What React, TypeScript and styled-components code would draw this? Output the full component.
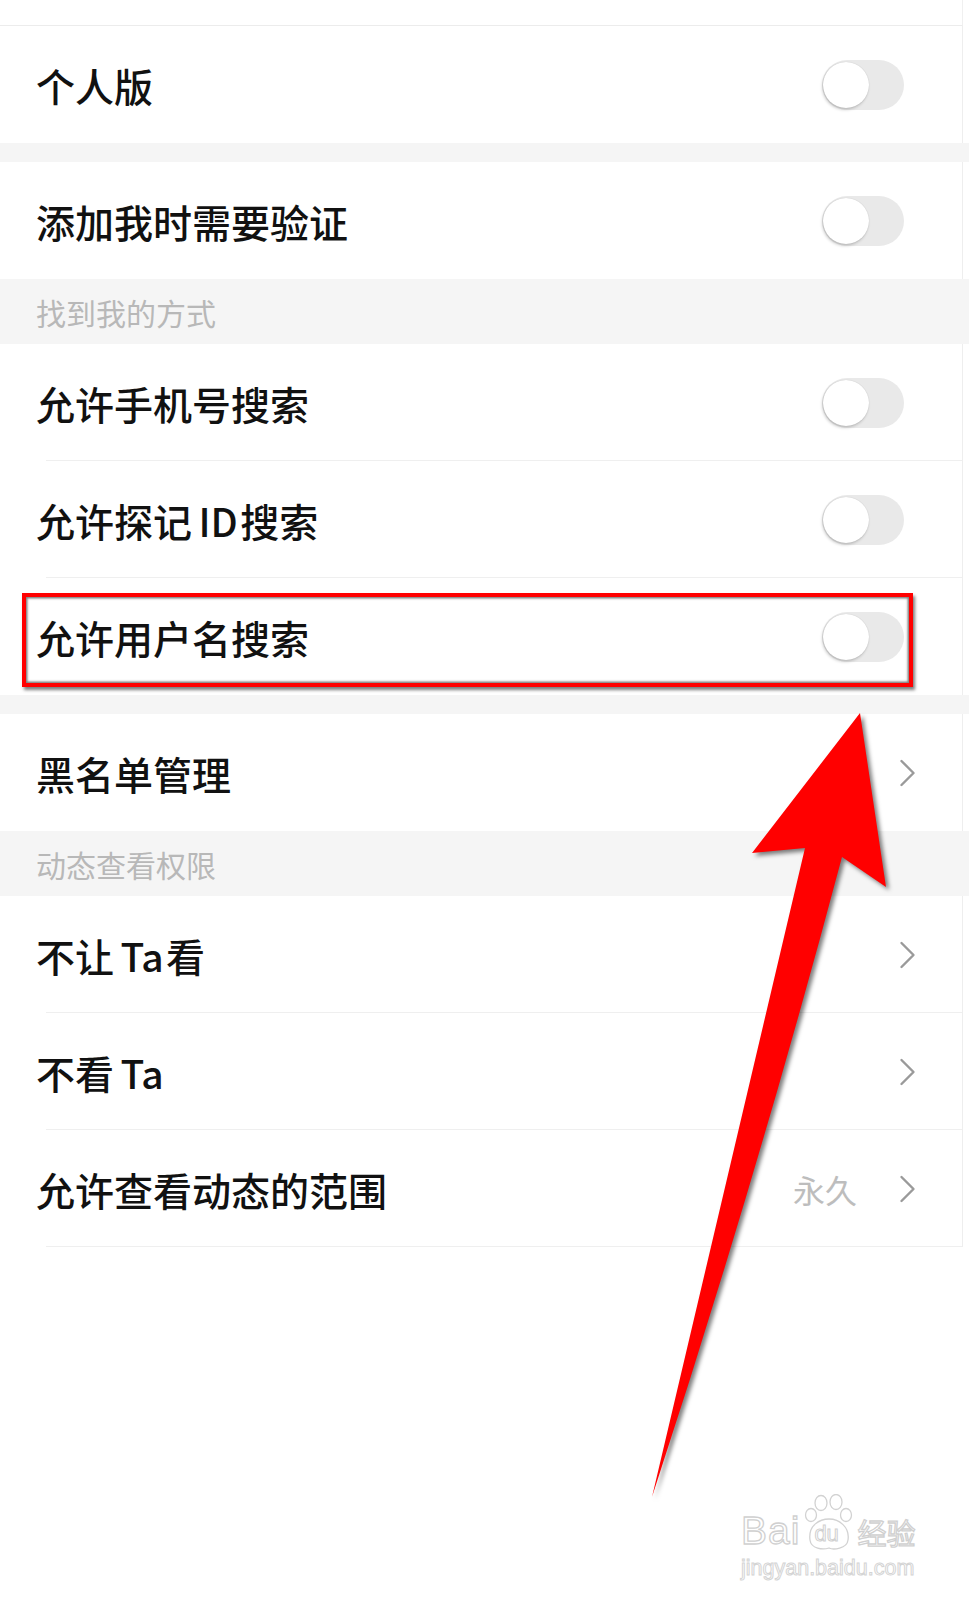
import React from 'react';
import styled, { createGlobalStyle } from 'styled-components';

type Item = {
  label: string;
  kind: 'toggle' | 'link';
  value?: string;
};

type Block =
  | { type: 'group'; items: Item[]; lastDivider?: boolean }
  | { type: 'gap' }
  | { type: 'header'; title: string };

// narrow spaces around latin words, the way iOS spaces mixed text
const sp = '\u2006';
const hair = '\u200A';

const blocks: Block[] = [
  { type: 'group', items: [{ label: '个人版', kind: 'toggle' }] },
  { type: 'gap' },
  { type: 'group', items: [{ label: '添加我时需要验证', kind: 'toggle' }] },
  { type: 'header', title: '找到我的方式' },
  {
    type: 'group',
    items: [
      { label: '允许手机号搜索', kind: 'toggle' },
      { label: `允许探记${sp}ID${hair}搜索`, kind: 'toggle' },
      { label: '允许用户名搜索', kind: 'toggle' },
    ],
  },
  { type: 'gap' },
  { type: 'group', items: [{ label: '黑名单管理', kind: 'link' }] },
  { type: 'header', title: '动态查看权限' },
  {
    type: 'group',
    lastDivider: true,
    items: [
      { label: `不让${sp}Ta${hair}看`, kind: 'link' },
      { label: `不看${sp}Ta`, kind: 'link' },
      { label: '允许查看动态的范围', kind: 'link', value: '永久' },
    ],
  },
];

const Chevron: React.FC = () => (
  <ChevronIcon width="17" height="28" viewBox="0 0 17 28">
    <path d="M2.5 2 L14.5 14 L2.5 26" />
  </ChevronIcon>
);

const SettingRow: React.FC<{ item: Item; divider: boolean }> = ({ item, divider }) => (
  <Row divider={divider}>
    <Label>{item.label}</Label>
    {item.value && <Value>{item.value}</Value>}
    {item.kind === 'toggle' ? (
      <Track>
        <Knob />
      </Track>
    ) : (
      <Chevron />
    )}
  </Row>
);

const Arrow: React.FC = () => (
  <ArrowSvg width="270" height="810" viewBox="0 0 270 810">
    <path
      d="M220 13 L246 187 L202 157 Q117 477 12 797 L165 148 L112 153 Z"
      fill="#ff0000"
    />
  </ArrowSvg>
);

const Watermark: React.FC = () => (
  <Mark>
    <MarkTop>
      <MarkWord>Bai</MarkWord>
      <Paw>
        <svg width="52" height="58" viewBox="0 0 52 58">
          <g fill="#fff" stroke="#d2d2d2" strokeWidth="1.3">
            <ellipse cx="9" cy="21" rx="5.5" ry="6.5" />
            <ellipse cx="19" cy="9" rx="6" ry="7.5" />
            <ellipse cx="34" cy="8" rx="6" ry="7.5" />
            <ellipse cx="44" cy="21" rx="5.5" ry="6.5" />
            <path d="M8 46 C6 31 18 25 27 25 C37 25 48 33 46 46 C45 55 31 56 27 54 C21 56 9 55 8 46 Z" />
          </g>
        </svg>
        <PawText>du</PawText>
      </Paw>
      <MarkWord cjk>经验</MarkWord>
    </MarkTop>
    <MarkUrl>jingyan.baidu.com</MarkUrl>
  </Mark>
);

const App: React.FC = () => (
  <>
    <GlobalStyle />
    <Page>
      <TopStrip />
      {blocks.map((block, i) => {
        if (block.type === 'gap') return <Gap key={i} />;
        if (block.type === 'header')
          return (
            <Header key={i}>
              <HeaderText>{block.title}</HeaderText>
            </Header>
          );
        return (
          <Group key={i}>
            {block.items.map((item, j) => (
              <SettingRow
                key={item.label}
                item={item}
                divider={j < block.items.length - 1 || !!block.lastDivider}
              />
            ))}
          </Group>
        );
      })}
      <Highlight />
      <Arrow />
      <Watermark />
    </Page>
  </>
);

const GlobalStyle = createGlobalStyle`
  body {
    margin: 0;
    background: #ffffff;
    font-family: "Noto Sans CJK SC", "Noto Sans", sans-serif;
  }
`;

const Page = styled.div`
  position: relative;
  width: 969px;
  min-height: 1600px;
  background: #ffffff;
  overflow: hidden;
`;

const TopStrip = styled.div`
  width: 963px;
  height: 26px;
  box-sizing: border-box;
  border-bottom: 1px solid #ececec;
  border-right: 1px solid #f0f0f0;
`;

const Group = styled.div`
  display: flex;
  flex-direction: column;
  background: #ffffff;
`;

const Row = styled.div<{ divider: boolean }>`
  position: relative;
  display: flex;
  align-items: center;
  box-sizing: border-box;
  width: 963px;
  height: 117px;
  padding: 0 46px 0 36px;
  border-right: 1px solid #eeeeee;
  background: #ffffff;

  &::after {
    content: '';
    display: ${(p) => (p.divider ? 'block' : 'none')};
    position: absolute;
    left: 46px;
    right: 0;
    bottom: 0;
    height: 1px;
    background: #efefef;
  }
`;

const Label = styled.span`
  flex: 1;
  font-size: 39px;
  font-weight: 500;
  color: #111111;
  white-space: nowrap;
`;

const Value = styled.span`
  margin-right: 42px;
  font-size: 32px;
  color: #bdbdbd;
`;

const Track = styled.div`
  display: flex;
  align-items: center;
  width: 82px;
  height: 50px;
  margin-right: 12px;
  border-radius: 25px;
  background: #e9e9e9;
`;

const Knob = styled.div`
  width: 46px;
  height: 46px;
  margin-left: 1px;
  border-radius: 50%;
  background: #ffffff;
  box-shadow: -1px 2px 3px rgba(0, 0, 0, 0.18), 0 0 1px rgba(0, 0, 0, 0.2);
`;

const ChevronIcon = styled.svg`
  flex-shrink: 0;
  fill: none;
  stroke: #9a9a9a;
  stroke-width: 2.4;
  stroke-linecap: round;
  stroke-linejoin: round;
`;

const Gap = styled.div`
  height: 19px;
  background: #f5f5f5;
`;

const Header = styled.div`
  display: flex;
  align-items: center;
  height: 65px;
  padding-left: 36px;
  background: #f5f5f5;
`;

const HeaderText = styled.span`
  font-size: 30px;
  color: #b8b8b8;
`;

const Highlight = styled.div`
  position: absolute;
  left: 22px;
  top: 593px;
  width: 891px;
  height: 94px;
  box-sizing: border-box;
  border: 4px solid #ff0000;
  box-shadow: 2px 3px 3px rgba(0, 0, 0, 0.5),
    inset 0 0 2px 1.5px rgba(0, 0, 0, 0.5);
  pointer-events: none;
`;

const ArrowSvg = styled.svg`
  position: absolute;
  left: 640px;
  top: 700px;
  filter: drop-shadow(3px 3px 2px rgba(0, 0, 0, 0.5));
  pointer-events: none;
`;

const Mark = styled.div`
  position: absolute;
  left: 741px;
  top: 1488px;
  display: flex;
  flex-direction: column;
  align-items: flex-start;
  pointer-events: none;
`;

const MarkTop = styled.div`
  display: flex;
  align-items: flex-end;
  height: 64px;
`;

const MarkWord = styled.span<{ cjk?: boolean }>`
  font-family: ${(p) =>
    p.cjk ? '"Noto Sans CJK SC", sans-serif' : '"Liberation Sans", Arial, sans-serif'};
  font-size: ${(p) => (p.cjk ? '29px' : '39px')};
  line-height: 1;
  color: #ffffff;
  -webkit-text-stroke: 1.3px #d0d0d0;
  margin-bottom: ${(p) => (p.cjk ? '5px' : '2px')};
  letter-spacing: ${(p) => (p.cjk ? '0' : '1px')};
`;

const Paw = styled.div`
  position: relative;
  width: 52px;
  height: 58px;
  margin: 0 3px 0 2px;
`;

const PawText = styled.span`
  position: absolute;
  left: 12px;
  top: 29px;
  font-family: "Liberation Sans", Arial, sans-serif;
  font-size: 22px;
  line-height: 1;
  color: #ffffff;
  -webkit-text-stroke: 1px #d0d0d0;
`;

const MarkUrl = styled.span`
  margin-top: 6px;
  font-family: "Liberation Sans", Arial, sans-serif;
  font-size: 21.5px;
  line-height: 1;
  color: #ffffff;
  -webkit-text-stroke: 1px #d4d4d4;
`;

export default App;
